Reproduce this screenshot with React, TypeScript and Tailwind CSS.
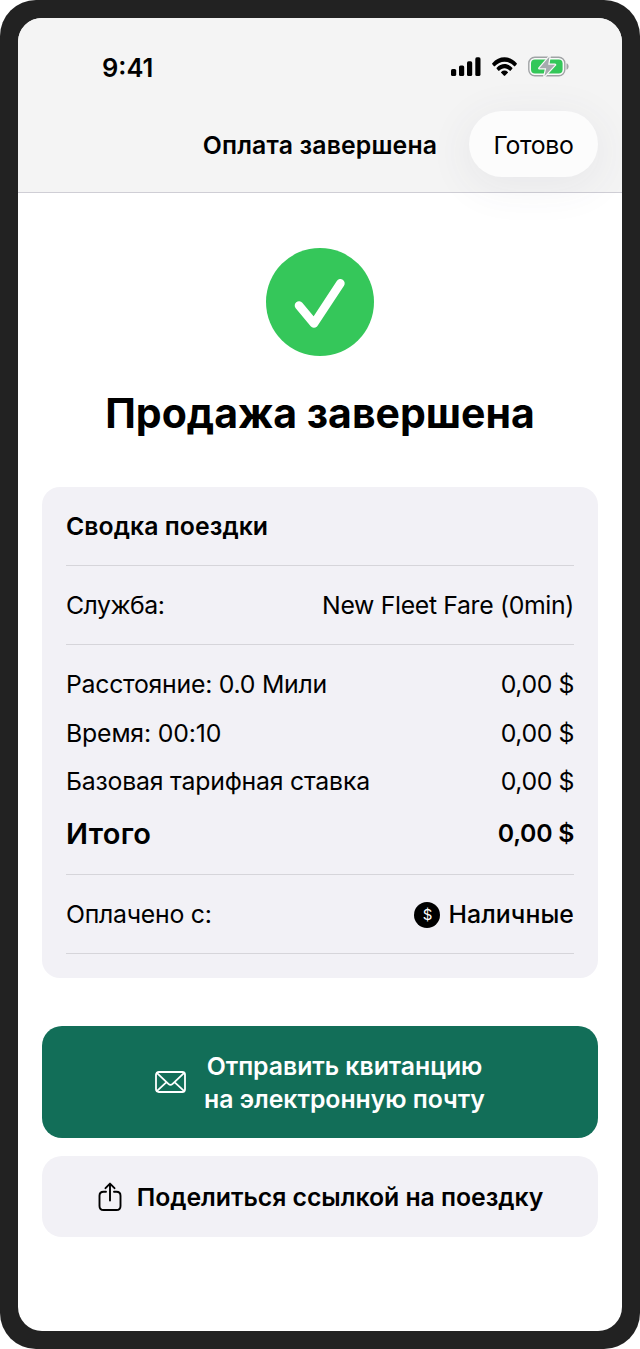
import type { ReactNode } from "react";

function SignalIcon() {
  return (
    <svg width="30" height="19" viewBox="0 0 30 19" fill="#000" aria-hidden="true">
      <rect x="0" y="12" width="5.2" height="7" rx="1.6" />
      <rect x="8" y="8.5" width="5.2" height="10.5" rx="1.6" />
      <rect x="16" y="4.3" width="5.2" height="14.7" rx="1.6" />
      <rect x="24.3" y="0.3" width="5.2" height="18.7" rx="1.6" />
    </svg>
  );
}

function WifiIcon() {
  return (
    <svg width="25" height="19" viewBox="0.3 2 16.4 10.2" preserveAspectRatio="none" fill="#000" aria-hidden="true">
      <path d="M8.500 4.500c2.400 0 4.700.9 6.400 2.500.1.100.4.100.5 0l1.100-1.100c.2-.2.2-.4 0-.6-4.500-4.200-11.500-4.200-16 0-.2.2-.2.4 0 .6l1.100 1.100c.1.100.4.100.5 0C3.800 5.400 6.100 4.500 8.500 4.500z" />
      <path d="M8.500 8.100c1.300 0 2.500.5 3.500 1.300.2.100.4.100.5 0l1.100-1.100c.2-.2.2-.4 0-.5-2.900-2.700-7.300-2.700-10.200 0-.2.1-.2.3 0 .5l1.100 1.100c.1.100.3.100.5 0 1-.8 2.200-1.300 3.500-1.300z" />
      <path d="M10.700 10.500c.2-.1.2-.4 0-.5-1.300-1-3.100-1-4.400 0-.2.1-.2.400 0 .5l1.900 1.600c.2.100.4.100.6 0z" />
    </svg>
  );
}

function BatteryIcon() {
  return (
    <svg width="41" height="21" viewBox="0 0 41 21" aria-hidden="true">
      <rect x="0.8" y="1.300" width="36" height="18.400" rx="6" fill="#fafafa" stroke="#a0a3a5" strokeWidth="1.400" />
      <rect x="3" y="3.500" width="31.600" height="14" rx="4" fill="#34c759" />
      <path d="M38.500 7.300c1.400.6 2.100 1.700 2.100 3.200s-.7 2.600-2.100 3.200z" fill="#a0a3a5" />
      <path d="M21.500 0.600 11.300 12.300H18.200L16.400 20.300 27.100 8.800H20.200z" fill="#a6abae" stroke="#f8f8f8" strokeWidth="2.400" strokeLinejoin="round" />
      <path d="M21.500 0.600 11.300 12.300H18.200L16.400 20.300 27.100 8.800H20.200z" fill="#a6abae" />
    </svg>
  );
}

function CheckBadge() {
  return (
    <div className="flex size-[108px] items-center justify-center rounded-full bg-[#35c75a]">
      <svg width="108" height="108" viewBox="0 0 108 108" fill="none" aria-hidden="true">
        <path d="M33 57.500 48 75.500 74.400 35.300" stroke="#fff" strokeWidth="8.600" strokeLinecap="round" strokeLinejoin="round" />
      </svg>
    </div>
  );
}

function MailIcon() {
  return (
    <svg width="31" height="22" viewBox="0 0 31 22" fill="none" stroke="#fff" strokeWidth="1.800" strokeLinecap="round" strokeLinejoin="round" aria-hidden="true">
      <rect x="1" y="1" width="29" height="20" rx="2.800" />
      <path d="M1.800 1.800 13.400 12.900q2.100 1.900 4.200 0L29.200 1.800M1.800 20.200l9.700-9.100M29.200 20.200l-9.700-9.100" />
    </svg>
  );
}

function ShareIcon() {
  return (
    <svg width="24" height="30" viewBox="0 0 24 30" fill="none" stroke="#000" strokeWidth="1.900" strokeLinecap="round" strokeLinejoin="round" aria-hidden="true">
      <path d="M8 9.700H5.600Q1.500 9.700 1.500 13.800V23.900Q1.500 28 5.600 28H18.400Q22.500 28 22.500 23.900V13.800Q22.500 9.700 18.400 9.700H16" />
      <path d="M12 18.500V1.800M7.500 6.200 12 1.600l4.500 4.600" />
    </svg>
  );
}

function Row({ label, value, labelClass = "", valueClass = "" }: { label: string; value: ReactNode; labelClass?: string; valueClass?: string }) {
  return (
    <div className="flex h-[48.5px] items-center justify-between whitespace-nowrap">
      <span className={labelClass}>{label}</span>
      <span className={valueClass}>{value}</span>
    </div>
  );
}

export default function App() {
  return (
    <div className="h-[1349px] w-[640px] overflow-hidden rounded-[36px] bg-[#222222] p-[18px] font-['Inter',sans-serif] text-[24.8px] leading-[33px] text-black">
      <div className="flex h-full flex-col overflow-hidden rounded-[24px] bg-white">
        <header className="h-[175px] shrink-0 border-b border-[#cfced5] bg-[#f4f4f4]">
          <div className="flex h-[93px] items-center justify-between pt-[4px] pr-[53px] pl-[84px]">
            <span className="pt-px text-[25.5px] font-semibold">9:41</span>
            <div className="flex items-center">
              <SignalIcon />
              <div className="ml-[11px]"><WifiIcon /></div>
              <div className="ml-[11px]"><BatteryIcon /></div>
            </div>
          </div>
          <div className="grid h-[66px] grid-cols-[1fr_auto_1fr] items-center pr-6 pl-6">
            <span />
            <h1 className="pt-[2px] font-semibold tracking-[0.15px] whitespace-nowrap">Оплата завершена</h1>
            <button className="h-[66px] w-[129px] justify-self-end rounded-full bg-[#fcfcfc] pt-[2px] tracking-[-0.4px] shadow-[0_8px_40px_6px_rgba(60,60,110,0.06)]">Готово</button>
          </div>
        </header>

        <main className="flex flex-col items-center px-6 pt-[55px]">
          <CheckBadge />
          <h2 className="mt-[32px] text-[41px] leading-[50px] font-bold whitespace-nowrap">Продажа завершена</h2>

          <section className="mt-[49px] h-[491px] w-full rounded-[18px] bg-[#f2f1f6] px-6 tracking-[-0.25px]">
            <div className="flex h-[79px] items-center border-b border-[#d6d5da] pt-px font-semibold tracking-[0.05px]">Сводка поездки</div>
            <div className="flex h-[79px] items-center border-b border-[#d6d5da] pt-px">
              <div className="w-full"><Row label="Служба:" value="New Fleet Fare (0min)" labelClass="tracking-[-0.5px]" valueClass="tracking-[-0.34px]" /></div>
            </div>
            <div className="h-[230px] border-b border-[#d6d5da] pt-[15.5px]">
              <Row label="Расстояние: 0.0 Мили" value="0,00 $" valueClass="tracking-[-0.4px]" />
              <Row label="Время: 00:10" value="0,00 $" labelClass="tracking-[-0.15px]" valueClass="tracking-[-0.4px]" />
              <Row label="Базовая тарифная ставка" value="0,00 $" labelClass="tracking-[-0.2px]" valueClass="tracking-[-0.4px]" />
              <div className="pt-[3px]">
                <Row label="Итого" value="0,00 $" labelClass="text-[29px] tracking-[0.3px] font-semibold" valueClass="font-semibold tracking-[-0.3px]" />
              </div>
            </div>
            <div className="flex h-[79px] items-center border-b border-[#d6d5da] pt-px">
              <div className="w-full">
                <Row
                  label="Оплачено с:"
                  value={
                    <span className="flex items-center gap-2">
                      <span className="flex size-[26px] items-center justify-center rounded-full bg-black text-[15px] leading-none text-white">$</span>
                      <span className="font-medium tracking-[0.1px]">Наличные</span>
                    </span>
                  }
                />
              </div>
            </div>
          </section>

          <button className="mt-[48px] flex h-[112px] w-full items-center justify-center gap-[18px] rounded-[20px] bg-[#126e58] font-semibold whitespace-nowrap text-white">
            <MailIcon />
            <span className="pt-[2px] text-center tracking-[-0.03px]">Отправить квитанцию<br />на электронную почту</span>
          </button>
          <button className="mt-[18px] flex h-[81px] w-full items-center justify-center gap-[15px] rounded-[20px] bg-[#f2f1f6] pl-px font-semibold tracking-[-0.03px] whitespace-nowrap">
            <ShareIcon />
            <span className="pt-px">Поделиться ссылкой на поездку</span>
          </button>
        </main>
      </div>
    </div>
  );
}
